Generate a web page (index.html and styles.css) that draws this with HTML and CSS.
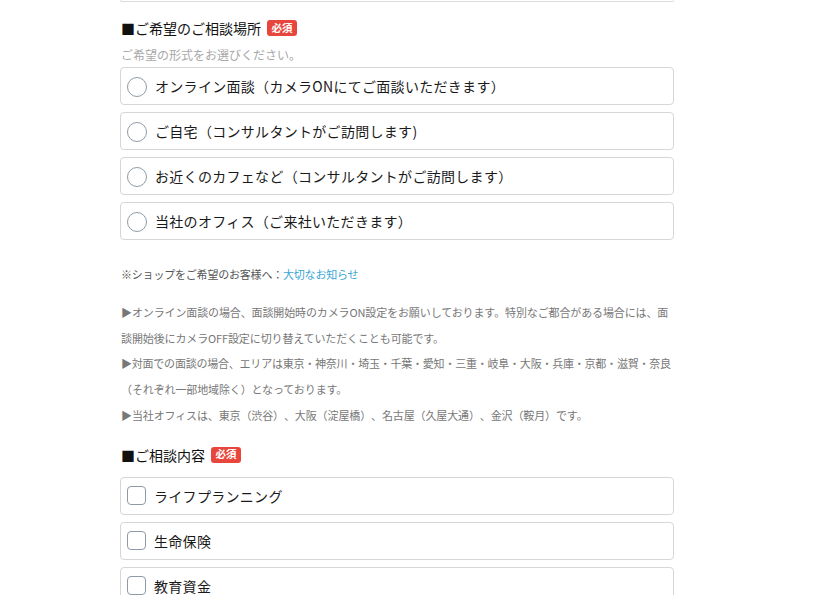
FILE: index.html
```html
<!DOCTYPE html>
<html lang="ja">
<head>
<meta charset="utf-8">
<link rel="stylesheet" href="styles.css">
</head>
<body>
<div class="form">
  <div class="prev-box"></div>

  <div class="field-head">
    <span class="field-title">■ご希望のご相談場所</span>
    <span class="badge">必須</span>
  </div>
  <p class="hint">ご希望の形式をお選びください。</p>
  <div class="options">
    <label class="option"><span class="radio"></span><span class="opt-text">オンライン面談（カメラONにてご面談いただきます）</span></label>
    <label class="option"><span class="radio"></span><span class="opt-text">ご自宅（コンサルタントがご訪問します)</span></label>
    <label class="option"><span class="radio"></span><span class="opt-text">お近くのカフェなど（コンサルタントがご訪問します）</span></label>
    <label class="option"><span class="radio"></span><span class="opt-text">当社のオフィス（ご来社いただきます）</span></label>
  </div>

  <p class="notice">※ショップをご希望のお客様へ：<a class="link" href="#">大切なお知らせ</a></p>

  <p class="notes">▶オンライン面談の場合、面談開始時のカメラON設定をお願いしております。特別なご都合がある場合には、面談開始後にカメラOFF設定に切り替えていただくことも可能です。<br><span class="area">▶対面での面談の場合、エリアは東京・神奈川・埼玉・千葉・愛知・三重・岐阜・大阪・兵庫・京都・滋賀・奈良</span>（それぞれ一部地域除く）となっております。<br>▶当社オフィスは、東京（渋谷）、大阪（淀屋橋）、名古屋（久屋大通）、金沢（鞍月）です。</p>

  <div class="field-head field-head-2">
    <span class="field-title">■ご相談内容</span>
    <span class="badge">必須</span>
  </div>
  <div class="options options-2">
    <label class="option"><span class="check"></span><span class="opt-text">ライフプランニング</span></label>
    <label class="option"><span class="check"></span><span class="opt-text">生命保険</span></label>
    <label class="option"><span class="check"></span><span class="opt-text">教育資金</span></label>
  </div>
</div>
</body>
</html>
```

FILE: styles.css
```css
html, body {
  margin: 0;
  padding: 0;
  background: #ffffff;
}
body {
  font-family: "Noto Sans CJK JP", "Noto Sans", sans-serif;
  color: #222;
  overflow: hidden;
  height: 595px;
  text-spacing-trim: space-all;
}
.form {
  width: 554px;
  margin-left: 120px;
}
.prev-box {
  height: 1px;
  border: 1px solid #dcdcdc;
  border-top: none;
  border-radius: 0 0 4px 4px;
}
.field-head {
  display: flex;
  align-items: center;
  gap: 6px;
  margin-top: 16px;
  height: 20px;
}
.field-head-2 {
  margin-top: 16px;
}
.field-title {
  font-size: 14px;
  line-height: 20px;
  color: #111;
  padding-left: 1px;
}
.badge {
  display: inline-flex;
  align-items: center;
  justify-content: center;
  width: 30px;
  height: 16px;
  background: #e8453c;
  color: #fff;
  font-size: 10.5px;
  font-weight: bold;
  border-radius: 3px;
  line-height: 1;
}
.hint {
  margin: 8px 0 0;
  font-size: 12px;
  line-height: 18px;
  color: #a8a8a8;
  padding-left: 1px;
}
.options {
  display: flex;
  flex-direction: column;
  gap: 7px;
  margin-top: 3px;
}
.options-2 {
  margin-top: 12px;
}
.option {
  display: flex;
  align-items: center;
  height: 36px;
  border: 1px solid #d6d6d6;
  border-radius: 4px;
  padding-left: 6px;
  gap: 8px;
}
.radio {
  width: 18px;
  height: 18px;
  border: 1px solid #8e9ba6;
  border-radius: 50%;
  flex: none;
  margin-top: 2px;
}
.check {
  width: 17px;
  height: 17px;
  border: 1px solid #8e9ba6;
  border-radius: 4px;
  flex: none;
}
.opt-text {
  font-size: 14px;
  line-height: 20px;
  color: #1a1a1a;
  letter-spacing: 0.3px;
}
.notice {
  margin: 25px 0 0;
  font-size: 11px;
  line-height: 18px;
  color: #555;
  padding-left: 1px;
  letter-spacing: -0.2px;
}
.link {
  color: #3aa6d4;
  text-decoration: none;
}
.notes {
  margin: 17px 0 0;
  font-size: 11px;
  line-height: 25.7px;
  color: #777;
  padding-left: 1px;
  letter-spacing: -0.12px;
}
.area {
  letter-spacing: -0.22px;
}
```
